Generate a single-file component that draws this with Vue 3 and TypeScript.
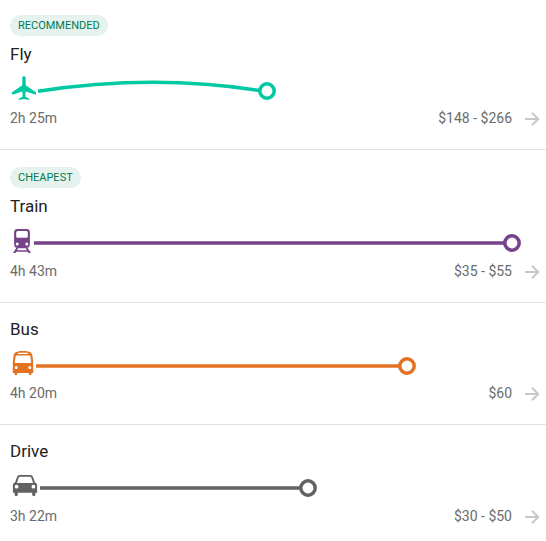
<script setup lang="ts">
interface Route {
  mode: 'plane' | 'train' | 'bus' | 'car'
  name: string
  tag?: string
  duration: string
  price: string
  color: string
  start: number
  end: number
}

const routes: Route[] = [
  { mode: 'plane', name: 'Fly', tag: 'Recommended', duration: '2h 25m', price: '$148 - $266', color: '#00c9a2', start: 38, end: 267 },
  { mode: 'train', name: 'Train', tag: 'Cheapest', duration: '4h 43m', price: '$35 - $55', color: '#76428a', start: 34, end: 512 },
  { mode: 'bus', name: 'Bus', duration: '4h 20m', price: '$60', color: '#e37222', start: 36, end: 407 },
  { mode: 'car', name: 'Drive', duration: '3h 22m', price: '$30 - $50', color: '#626262', start: 40, end: 308 },
]

function trackPath(r: Route): string {
  return r.mode === 'plane'
    ? `M${r.start} 17.2Q153 -0.400 ${r.end - 7} 16.6`
    : `M${r.start} 17H${r.end - 7}`
}
</script>

<template>
  <main class="routes">
    <section v-for="r in routes" :key="r.name" class="route">
      <div v-if="r.tag" class="tag">{{ r.tag }}</div>
      <h2 class="name">{{ r.name }}</h2>
      <svg class="track" width="546" height="30" viewBox="0 0 546 30" :style="{ color: r.color }">
        <path :d="trackPath(r)" fill="none" stroke="currentColor" stroke-width="3.5" />
        <circle :cx="r.end" cy="17" r="7.2" fill="#fff" stroke="currentColor" stroke-width="3.5" />
        <path
          v-if="r.mode === 'plane'"
          fill="currentColor"
          d="M24 2c1.100 0 1.700 1.200 1.700 2.600v6.600L36 18.200v2.500l-10.300-3.200-.5 5 4 2.200V26L24 24.900 18.800 26v-1.300l4-2.200-.5-5L12 20.700v-2.500l10.300-7V4.600C22.300 3.200 22.900 2 24 2z"
        />
        <path
          v-else-if="r.mode === 'train'"
          fill="currentColor"
          fill-rule="evenodd"
          d="M17.500 3h9q3.400 0 3.400 3.400V18.500q0 2.600-2.400 3.200L31 27h-2.500l-.7-1.200H16.200L15.500 27H13l3.500-5.300q-2.400-.6-2.400-3.200V6.400Q14.100 3 17.500 3zM17.700 4.900q-1.500 0-1.500 1.500v4.100q0 1.300 1.300 1.300h9q1.300 0 1.300-1.300V6.400q0-1.500-1.500-1.500zM17.200 16.500a1.500 1.500 0 1 0 0 3 1.500 1.500 0 0 0 0-3zM26.800 16.500a1.500 1.500 0 1 0 0 3 1.500 1.500 0 0 0 0-3zM18.200 22.300l-1.100 1.900h9.800l-1.100-1.900z"
        />
        <path
          v-else-if="r.mode === 'bus'"
          fill="currentColor"
          fill-rule="evenodd"
          d="M23 2c4 0 6.600.6 8 1.700 1 .8 1.400 2.200 1.600 4.300l.6 5.500V24H31.500v1q0 1.200-1.300 1.200T28.900 25v-1H17.100v1q0 1.200-1.300 1.200T14.500 25v-1h-1.700V13.500L13.400 8c.2-2.100.6-3.500 1.600-4.300C16.400 2.600 19 2 23 2zM18.800 3.700q-.8 0-.8.700t.8.700h8.400q.8 0 .8-.7t-.8-.7zM16.600 6.500q-.9 0-1 .9L14.800 13.300q0 .8.900.8h14.600q.9 0 .9-.8l-.8-5.900q-.1-.9-1-.9zM16.200 17a1.500 1.500 0 1 0 0 3 1.500 1.500 0 0 0 0-3zM29.800 17a1.500 1.500 0 1 0 0 3 1.500 1.500 0 0 0 0-3z"
        />
        <path
          v-else
          fill="currentColor"
          fill-rule="evenodd"
          d="M19.500 4h11q1.800 0 2.400 1.700l2 5.600 1.400 1q.8.700.8 1.800v7.700h-1.700v1.800q0 1.700-1.600 1.700t-1.600-1.700v-1.800H17.800v1.800q0 1.700-1.600 1.700t-1.600-1.700v-1.800H12.900v-7.700q0-1.100.8-1.800l1.400-1 2-5.600Q17.700 4 19.500 4zM20 5.700q-.9 0-1.200.9L16.900 12h16.200l-1.900-5.400q-.3-.9-1.200-.9zM16.600 13.800a1.900 1.900 0 1 0 0 3.800 1.900 1.900 0 0 0 0-3.800zM33.400 13.800a1.900 1.900 0 1 0 0 3.800 1.900 1.900 0 0 0 0-3.800z"
        />
      </svg>
      <div class="details">
        <span class="duration">{{ r.duration }}</span>
        <span class="price">{{ r.price }}</span>
        <svg class="arrow" width="16" height="16" viewBox="0 0 16 16">
          <path d="M1 8H14M8 1.800L14.200 8L8 14.200" fill="none" stroke="#c8c8c8" stroke-width="2" />
        </svg>
      </div>
    </section>
  </main>
</template>

<style>
body {
  background: #fff;
  overflow: hidden;
}
</style>

<style scoped>
.routes {
  width: 546px;
  font-family: Roboto, "Liberation Sans", sans-serif;
}
.route {
  display: flex;
  flex-direction: column;
  align-items: flex-start;
  box-sizing: border-box;
  height: 122px;
  padding-top: 15px;
  border-bottom: 1px solid #e3e3e3;
}
.route:first-child {
  height: 150px;
}
.route:nth-child(2) {
  height: 153px;
  padding-top: 17px;
}
.route:last-child {
  border-bottom: 0;
}
.tag {
  height: 21px;
  margin: 0 0 7px 10px;
  padding: 0 8px;
  border-radius: 11px;
  background: #e5f2ee;
  color: #007a53;
  font-size: 11px;
  line-height: 21px;
  text-transform: uppercase;
}
.name {
  margin: 0 0 0 10px;
  color: #222;
  font-size: 17px;
  font-weight: 400;
  line-height: 22px;
  height: 31px;
}
.track {
  display: block;
  flex: none;
}
.details {
  display: flex;
  align-items: center;
  box-sizing: border-box;
  width: 100%;
  height: 28px;
  padding: 0 6px 0 10px;
  color: #6b6b6b;
  font-size: 14px;
}
.route:nth-child(even) .details {
  height: 30px;
}
.price {
  margin-left: auto;
}
.arrow {
  margin: 2px 0 0 12px;
}
</style>
